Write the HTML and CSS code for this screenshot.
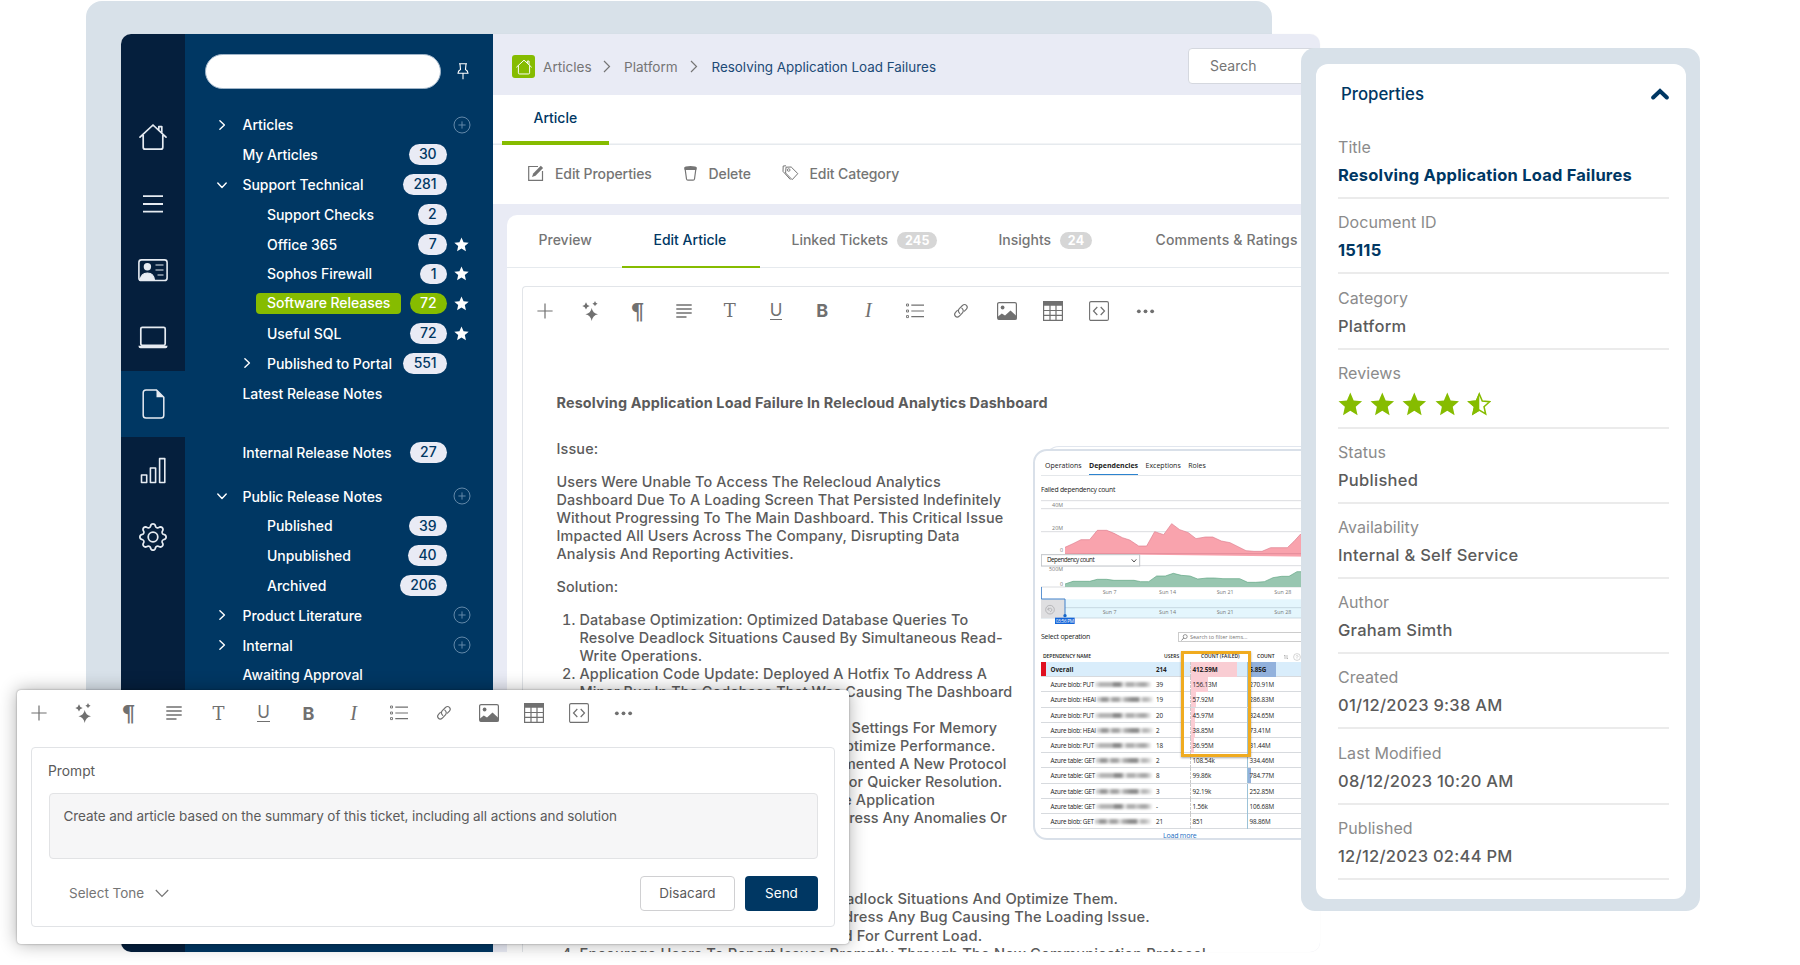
FILE: index.html
```html
<!DOCTYPE html>
<html lang="en">
  <head>
    <meta charset="UTF-8" />
    <meta name="viewport" content="width=device-width, initial-scale=1.0" />
    <title>Knowledge Base - Resolving Application Load Failures</title>
    <link rel="stylesheet" href="styles.css">
  </head>
  <body>
    <!-- Icon sprite -->
    <svg class="sprite" aria-hidden="true">
      <symbol id="i-home" viewBox="0 0 28 28">
        <path d="M1 14.2 14 2l13 12.2M4.2 12v12.2q0 2 2 2h15.6q2 0 2-2V12M19.8 6.6V3.6h3v6" fill="none" stroke="currentColor" stroke-width="1.7" stroke-linecap="round" stroke-linejoin="round" />
      </symbol>
      <symbol id="i-star" viewBox="0 0 24 24">
        <path d="M12 .6l3.3 7.6 8.2.8-6.2 5.5 1.8 8.1L12 18.4l-7.1 4.2 1.8-8.1L.5 9l8.2-.8z" fill="currentColor" />
      </symbol>
      <symbol id="i-star-half" viewBox="0 0 24 24">
        <path d="M12 2l2.9 6.8 7.2.7-5.5 4.8 1.6 7.1L12 17.7l-6.2 3.7 1.6-7.1L1.9 9.5l7.2-.7z" fill="none" stroke="currentColor" stroke-width="1.5" />
        <path d="M12 .6v17.8l-7.1 4.2 1.8-8.1L.5 9l8.2-.8z" fill="currentColor" />
      </symbol>
      <symbol id="i-chev" viewBox="0 0 10 10">
        <path d="M2.9.8 7.4 5 2.9 9.2" fill="none" stroke="currentColor" stroke-width="1.4" stroke-linecap="round" stroke-linejoin="round" />
      </symbol>
      <symbol id="i-add" viewBox="0 0 18 18">
        <path d="M9 1a8 8 0 1 0 0 16A8 8 0 0 0 9 1zM9 5.4v7.2M5.4 9h7.2" fill="none" stroke="currentColor" />
      </symbol>
      <symbol id="t-plus" viewBox="0 0 20 20">
        <path d="M10 2.4v15.2M2.4 10h15.2" stroke="currentColor" stroke-width="1.2" />
      </symbol>
      <symbol id="t-spark" viewBox="0 0 20 20">
        <path d="M10.7 7q.9 5.2 6.3 6.3-5.4 1.1-6.3 6.7Q9.8 14.4 4.4 13.3 9.8 12.2 10.7 7zM5 1.2q.6 3 3.7 3.7-3.1.7-3.7 3.7-.6-3-3.7-3.7Q4.4 4.2 5 1.2zM14 .1q.4 2.1 2.6 2.6-2.2.5-2.6 2.6-.4-2.1-2.6-2.6Q13.6 2.2 14 .1z" fill="currentColor" />
      </symbol>
      <symbol id="t-lines" viewBox="0 0 20 20">
        <path d="M2.3 4h15.4M2.3 8h15.4M2.3 12h15.4M2.3 16h10.2" stroke="currentColor" stroke-width="1.3" />
      </symbol>
      <symbol id="t-list" viewBox="0 0 20 20">
        <path d="M6.3 4.2H19M6.3 10H19M6.3 15.6H19" stroke="currentColor" stroke-width="1.2" />
        <path d="M1.5 3h2v2h-2zM1.5 9h2v2h-2zM1.5 14.6h2v2h-2z" fill="none" stroke="currentColor" stroke-width=".9" />
      </symbol>
      <symbol id="t-link" viewBox="0 0 20 20">
        <g fill="none" stroke="currentColor" stroke-width="1.25" stroke-linecap="round">
          <path d="M8.6 12.6C6.8 11 6.7 8.9 8.1 7.4l3.5-3.5c3.3-2.9 7 1 4.4 4l-2.2 2.3" />
          <path d="M10.9 6.8c1.9 1.5 2.1 3.8.7 5.3l-3.4 3.5c-3.3 2.9-7-1-4.3-4l2.1-2.2" />
        </g>
      </symbol>
      <symbol id="t-image" viewBox="0 0 20 20">
        <rect x=".6" y="1.6" width="18.8" height="16.8" rx="1.5" fill="none" stroke="currentColor" stroke-width="1.2" />
        <circle cx="5.6" cy="6.5" r="1.9" fill="currentColor" />
        <path d="M1 15.5 4.8 12.6l3.2 2 5.5-5 6 5.4v3.4H1z" fill="currentColor" />
      </symbol>
      <symbol id="t-table" viewBox="0 0 20 20">
        <path d="M.6.6h18.8v18.8H.6zM.6 9.5h18.8M.6 14.4h18.8M7 4v15.4M13 4v15.4" fill="none" stroke="currentColor" stroke-width="1.2" />
        <path d="M.3 1.5Q.3.2 1.6.2h16.8q1.3 0 1.3 1.3v3.3H.3z" fill="currentColor" />
      </symbol>
      <symbol id="t-code" viewBox="0 0 20 20">
        <rect x=".6" y=".6" width="18.8" height="18.8" rx="1.4" fill="none" stroke="currentColor" stroke-width="1.1" />
        <path d="M8.3 6 4.5 10l3.8 4M11.7 6l3.8 4-3.8 4" fill="none" stroke="currentColor" stroke-width="1.2" />
      </symbol>
      <symbol id="t-more" viewBox="0 0 20 20">
        <circle cx="3" cy="10.3" r="2" fill="currentColor" /><circle cx="10" cy="10.3" r="2" fill="currentColor" /><circle cx="17" cy="10.3" r="2" fill="currentColor" />
      </symbol>
    </svg>

    <div class="backdrop"></div>

    <div class="app-window">
      <!-- Icon rail -->
      <nav class="rail">
        <a class="rail-item"><svg width="28" height="28"><use href="#i-home" /></svg></a>
        <a class="rail-item"><svg width="20" height="18" viewBox="0 0 20 18"><path d="M0 1.2h20M0 9h20M0 16.7h20" stroke="currentColor" stroke-width="1.8" /></svg></a>
        <a class="rail-item">
          <svg width="30" height="23" viewBox="0 0 30 23">
            <rect x=".9" y=".9" width="28.2" height="20.6" rx="2.6" fill="none" stroke="currentColor" stroke-width="1.6" />
            <circle cx="9.4" cy="7.8" r="3.7" fill="currentColor" />
            <path d="M2 21.5q1-7.5 7.4-7.5t7.2 7.5zM17.5 6h8M17.5 11h8M19.5 16h6" fill="currentColor" stroke="currentColor" stroke-width="1.2" />
          </svg>
        </a>
        <a class="rail-item">
          <svg width="30" height="23" viewBox="0 0 30 23">
            <rect x="2.8" y="1.3" width="24.4" height="18" rx="1.5" fill="none" stroke="currentColor" stroke-width="1.7" />
            <path d="M.4 19.8h29.2q-.2 2.5-2 2.5H2.4q-1.8 0-2-2.5z" fill="currentColor" />
          </svg>
        </a>
        <a class="rail-item active">
          <svg width="23" height="30" viewBox="0 0 23 30">
            <path d="M14.5 1H4Q1.2 1 1.2 3.8v22.4Q1.2 29 4 29h15q2.8 0 2.8-2.8V8.3z" fill="none" stroke="currentColor" stroke-width="1.5" />
            <path d="M14.5 1v7.3h7.3z" fill="currentColor" />
          </svg>
        </a>
        <a class="rail-item">
          <svg width="27" height="27" viewBox="0 0 27 27">
            <path d="M1.5 18h5.2v7.5H1.5zM10.4 11h5.2v14.5h-5.2zM19.6 1.6h5.2v23.9h-5.2z" fill="none" stroke="currentColor" stroke-width="1.6" stroke-linejoin="round" />
          </svg>
        </a>
        <a class="rail-item">
          <svg width="28" height="28" viewBox="0 0 16 16" fill="currentColor">
            <path d="M8 4.754a3.246 3.246 0 1 0 0 6.492 3.246 3.246 0 0 0 0-6.492zM5.754 8a2.246 2.246 0 1 1 4.492 0 2.246 2.246 0 0 1-4.492 0z" />
            <path d="M9.796 1.343c-.527-1.79-3.065-1.79-3.592 0l-.094.319a.873.873 0 0 1-1.255.52l-.292-.16c-1.64-.892-3.433.902-2.54 2.541l.159.292a.873.873 0 0 1-.52 1.255l-.319.094c-1.79.527-1.79 3.065 0 3.592l.319.094a.873.873 0 0 1 .52 1.255l-.16.292c-.892 1.64.901 3.434 2.541 2.54l.292-.159a.873.873 0 0 1 1.255.52l.094.319c.527 1.79 3.065 1.79 3.592 0l.094-.319a.873.873 0 0 1 1.255-.52l.292.16c1.64.893 3.434-.902 2.54-2.541l-.159-.292a.873.873 0 0 1 .52-1.255l.319-.094c1.79-.527 1.79-3.065 0-3.592l-.319-.094a.873.873 0 0 1-.52-1.255l.16-.292c.893-1.64-.902-3.433-2.541-2.54l-.292.159a.873.873 0 0 1-1.255-.52l-.094-.319zm-2.633.283c.246-.835 1.428-.835 1.674 0l.094.319a1.873 1.873 0 0 0 2.693 1.115l.291-.16c.764-.415 1.6.42 1.184 1.185l-.159.292a1.873 1.873 0 0 0 1.116 2.692l.318.094c.835.246.835 1.428 0 1.674l-.319.094a1.873 1.873 0 0 0-1.115 2.693l.16.291c.415.764-.42 1.6-1.185 1.184l-.291-.159a1.873 1.873 0 0 0-2.693 1.116l-.094.318c-.246.835-1.428.835-1.674 0l-.094-.319a1.873 1.873 0 0 0-2.692-1.115l-.292.16c-.764.415-1.6-.42-1.184-1.185l.159-.291A1.873 1.873 0 0 0 1.945 8.93l-.319-.094c-.835-.246-.835-1.428 0-1.674l.319-.094A1.873 1.873 0 0 0 3.06 4.377l-.16-.292c-.415-.764.42-1.6 1.185-1.184l.292.159a1.873 1.873 0 0 0 2.692-1.115l.094-.319z" />
          </svg>
        </a>
      </nav>

      <!-- Category tree -->
      <aside class="tree">
        <div class="tree-search">
          <div class="search-pill"></div>
          <svg width="12" height="17" viewBox="0 0 12 17"><path d="M2 .8h8M3 1l.5 5.5Q1 7.8 1 10.2h10Q11 7.8 8.5 6.5L9 1M6 10.2v6" fill="none" stroke="currentColor" stroke-width="1.1" /></svg>
        </div>

        <div class="row"><svg class="chev"><use href="#i-chev" /></svg><span class="label">Articles</span><svg class="add"><use href="#i-add" /></svg></div>
        <div class="row"><span class="chev"></span><span class="label">My Articles</span><span class="count">30</span></div>
        <div class="row"><svg class="chev open"><use href="#i-chev" /></svg><span class="label">Support Technical</span><span class="count">281</span></div>
        <div class="row sub"><span class="chev"></span><span class="label">Support Checks</span><span class="count">2</span></div>
        <div class="row sub"><span class="chev"></span><span class="label">Office 365</span><span class="count">7</span><svg class="fav"><use href="#i-star" /></svg></div>
        <div class="row sub"><span class="chev"></span><span class="label">Sophos Firewall</span><span class="count">1</span><svg class="fav"><use href="#i-star" /></svg></div>
        <div class="row sub selected"><span class="chev"></span><span class="label">Software Releases</span><span class="count">72</span><svg class="fav"><use href="#i-star" /></svg></div>
        <div class="row sub"><span class="chev"></span><span class="label">Useful SQL</span><span class="count">72</span><svg class="fav"><use href="#i-star" /></svg></div>
        <div class="row sub"><svg class="chev"><use href="#i-chev" /></svg><span class="label">Published to Portal</span><span class="count">551</span></div>
        <div class="row"><span class="chev"></span><span class="label">Latest Release Notes</span></div>
        <div class="row gap-before"><span class="chev"></span><span class="label">Internal Release Notes</span><span class="count">27</span></div>
        <div class="row half-before"><svg class="chev open"><use href="#i-chev" /></svg><span class="label">Public Release Notes</span><svg class="add"><use href="#i-add" /></svg></div>
        <div class="row sub"><span class="chev"></span><span class="label">Published</span><span class="count">39</span></div>
        <div class="row sub"><span class="chev"></span><span class="label">Unpublished</span><span class="count">40</span></div>
        <div class="row sub"><span class="chev"></span><span class="label">Archived</span><span class="count">206</span></div>
        <div class="row"><svg class="chev"><use href="#i-chev" /></svg><span class="label">Product Literature</span><svg class="add"><use href="#i-add" /></svg></div>
        <div class="row"><svg class="chev"><use href="#i-chev" /></svg><span class="label">Internal</span><svg class="add"><use href="#i-add" /></svg></div>
        <div class="row"><span class="chev"></span><span class="label">Awaiting Approval</span></div>
      </aside>

      <!-- Main area -->
      <main class="main">
        <header class="crumbs">
          <span class="crumb-home"><svg width="16" height="16"><use href="#i-home" /></svg></span>
          <span class="crumb c1">Articles</span>
          <svg class="sep" viewBox="0 0 8 13"><path d="M1 1l5.5 5.5L1 12" fill="none" stroke="currentColor" stroke-width="1.2" /></svg>
          <span class="crumb c2">Platform</span>
          <svg class="sep" viewBox="0 0 8 13"><path d="M1 1l5.5 5.5L1 12" fill="none" stroke="currentColor" stroke-width="1.2" /></svg>
          <span class="crumb current">Resolving Application Load Failures</span>
          <div class="search-box">Search</div>
        </header>

        <div class="page-tabs"><span class="page-tab">Article</span></div>

        <div class="actions">
          <span class="action edit">
            <svg width="16" height="16" viewBox="0 0 16 16"><path d="M10 1.5H.7v13.8h13.8V6" fill="none" stroke="currentColor" stroke-width="1.2" /><path d="M4 12l1.2-3.5L12.8.8l2.3 2.2-7.6 7.7z" fill="currentColor" /></svg>
            Edit Properties
          </span>
          <span class="action delete">
            <svg width="13" height="16" viewBox="0 0 13 16"><path d="M1 3l1.5 11q.2 1.2 1.4 1.2h5.2q1.2 0 1.4-1.2L12 3" fill="none" stroke="currentColor" stroke-width="1.2" /><path d="M.3 2.6Q.3 1 6.5 1t6.2 1.6L12.3 5H.7z" fill="currentColor" /></svg>
            Delete
          </span>
          <span class="action category">
            <svg width="17" height="16" viewBox="0 0 17 16"><path d="M4 2.2 9.2 2l6.6 6.6-5.6 6.1L3.6 8z" fill="none" stroke="currentColor" /><path d="M4 .8 1.2 1 1 6.4l7.4 8.2" fill="none" stroke="currentColor" /><circle cx="6.7" cy="5" r="1.3" fill="none" stroke="currentColor" stroke-width=".9" /></svg>
            Edit Category
          </span>
        </div>

        <section class="card">
          <div class="card-tabs">
            <span class="card-tab preview">Preview</span>
            <span class="card-tab active">Edit Article</span>
            <span class="card-tab linked">Linked Tickets <b>245</b></span>
            <span class="card-tab insights">Insights <b>24</b></span>
            <span class="card-tab comments">Comments &amp; Ratings</span>
          </div>

          <div class="editor">
            <div class="toolbar">
              <span><svg><use href="#t-plus" /></svg></span>
              <span><svg><use href="#t-spark" /></svg></span>
              <span class="g-para">¶</span>
              <span><svg><use href="#t-lines" /></svg></span>
              <span class="g-text">T</span>
              <span class="g-under"><i>U</i></span>
              <span class="g-bold">B</span>
              <span class="g-italic">I</span>
              <span><svg><use href="#t-list" /></svg></span>
              <span><svg class="small"><use href="#t-link" /></svg></span>
              <span><svg><use href="#t-image" /></svg></span>
              <span><svg><use href="#t-table" /></svg></span>
              <span><svg><use href="#t-code" /></svg></span>
              <span><svg class="more"><use href="#t-more" /></svg></span>
            </div>

            <article class="doc">
              <h1>Resolving Application Load Failure In Relecloud Analytics Dashboard</h1>
              <div class="doc-cols">
                <div class="doc-text">
                  <p>Issue:</p>
                  <p>Users Were Unable To Access The Relecloud Analytics<br />
                    Dashboard Due To A Loading Screen That Persisted Indefinitely<br />
                    Without Progressing To The Main Dashboard. This Critical Issue<br />
                    Impacted All Users Across The Company, Disrupting Data<br />
                    Analysis And Reporting Activities.</p>
                  <p>Solution:</p>
                  <ol>
                    <li>Database Optimization: Optimized Database Queries To<br />
                      Resolve Deadlock Situations Caused By Simultaneous Read-<br />
                      Write Operations.</li>
                    <li>Application Code Update: Deployed A Hotfix To Address A<br />
                      <span class="snug">Minor Bug In The Codebase That Was Causing The Dashboard</span><br />
                      To Hang.</li>
                    <li>Resource Allocation: Increased Server Settings For Memory<br />
                      And Processing Capacities, Helping Optimize Performance.</li>
                    <li><span class="snug">User Communication: Our Team Implemented A New Protocol</span><br />
                      <span class="snug">To Report Any Load Failures Early On For Quicker Resolution.</span></li>
                    <li>Monitoring: Now Actively Tracking The Application<br />
                      <span class="snug">To Detect Any Problems Early And Address Any Anomalies Or</span></li>
                  </ol>
                </div>

                <!-- Dependency report -->
                <figure class="report">
                  <div class="report-tabs">
                    <span>Operations</span><span class="on">Dependencies</span><span>Exceptions</span><span>Roles</span>
                  </div>
                  <div class="report-title">Failed dependency count</div>
                  <svg class="chart" viewBox="66 200 810 384">
                    <g stroke="#c9ccd0" stroke-width="2">
                      <path d="M66 211h810M66 235h810M66 304h810" />
                      <path d="M66 406h810M66 470h810" />
                    </g>
                    <path d="M138 370v-19l24-11 24-12h26l23-28h28l22 9 25 13 22 7 27 18h24l24-43 27 9 24-33 24 18 26 9 23 18 28-5h22l26 12 26 5 24 12 24 12 24 2h24l26-11h50l20-19 20-22 40-42v110z" fill="#f9a3ad" />
                    <path d="M138 351l24-11 24-12h26l23-28h28l22 9 25 13 22 7 27 18h24l24-43 27 9 24-33 24 18 26 9 23 18 28-5h22l26 12 26 5 24 12 24 12 24 2h24l26-11h50l20-19 20-22" fill="none" stroke="#dc7c8c" stroke-width="2" />
                    <path d="M138 370h738" stroke="#d9828f" stroke-width="2" />
                    <path d="M138 470v-9l24-8h50l23-6h28l22 3h60l20 4h24l24-17h26l24-8 24 6 26 2 23 9 28-3h22l26 2h50l24 11h24l26-2 26-12 26-4h22l24-14h60v46z" fill="#98c6b0" />
                    <path d="M138 461l24-8h50l23-6h28l22 3h60l20 4h24l24-17h26l24-8 24 6 26 2 23 9 28-3h22l26 2h50l24 11h24l26-2 26-12 26-4h22l24-14h50" fill="none" stroke="#5fa482" stroke-width="2" />
                    <path d="M66 507h810v56H66z" fill="#e4f6fd" />
                    <path d="M138 532h738M66 563h810" stroke="#b8c9d4" stroke-width="2" />
                    <path d="M66 507h72v56H66z" fill="#dfdfe1" />
                    <path d="M67 470v36h71v52" fill="none" stroke="#3e7fc9" stroke-width="3" />
                    <circle cx="93" cy="538" r="13" fill="none" stroke="#a5a5a8" stroke-width="2" />
                    <path d="M89 532l-3 6 6 2M87 537q11-8 12 3l-6 5" fill="none" stroke="#a5a5a8" stroke-width="2" />
                    <circle cx="138" cy="556" r="5" fill="#1767c9" />
                    <path d="M108 562h59v19h-59z" fill="#1565d8" />
                    <rect x="67" y="373" width="295" height="34" fill="#fff" stroke="#c0c4c8" stroke-width="3" />
                    <path d="M338 387l7 8 7-8" fill="none" stroke="#333" stroke-width="2.5" />
                    <g class="axis">
                      <text x="132" y="231" text-anchor="end">40M</text>
                      <text x="132" y="299" text-anchor="end">20M</text>
                      <text x="132" y="366" text-anchor="end">0</text>
                      <text x="132" y="422" text-anchor="end">500M</text>
                      <text x="132" y="466" text-anchor="end">0</text>
                      <text x="251" y="491">Sun 7</text><text x="420" y="491">Sun 14</text><text x="593" y="491">Sun 21</text><text x="766" y="491">Sun 28</text>
                      <text x="251" y="552">Sun 7</text><text x="420" y="552">Sun 14</text><text x="593" y="552">Sun 21</text><text x="766" y="552">Sun 28</text>
                    </g>
                    <text x="84" y="396" class="pick" textLength="143">Dependency count</text>
                    <text x="110" y="577" class="stamp" textLength="55">03:56 PM</text>
                  </svg>
                  <div class="op-row">
                    <span>Select operation</span>
                    <div class="op-filter"><svg width="7" height="7" viewBox="0 0 7 7"><circle cx="4.2" cy="2.6" r="2" fill="none" stroke="#555" stroke-width=".6" /><path d="M2.7 4 .5 6.5" stroke="#555" stroke-width=".7" /></svg>Search to filter items...</div>
                  </div>
                  <div class="deps">
                    <div class="dep head"><span>DEPENDENCY NAME</span><span>USERS</span><span>COUNT (FAILED)</span><span>COUNT <svg width="20" height="8" viewBox="0 0 20 8"><path d="M2 3l1-1v4M5 2v4l1-1" fill="none" stroke="#999" stroke-width=".6" /><circle cx="15" cy="4" r="3.4" fill="none" stroke="#bbb" stroke-width=".6" /><path d="M13.8 3.2q1.2-1.6 2.4 0l-1.2 1.3v1" fill="none" stroke="#bbb" stroke-width=".6" /></svg></span></div>
                    <div class="dep overall"><span>Overall</span><span>214</span><span>412.59M</span><span>5.85G</span></div>
                    <div class="dep f1"><span>Azure blob: PUT<em></em></span><span>39</span><span>156.13M</span><span>270.91M</span></div>
                    <div class="dep f2"><span>Azure blob: HEAI<em></em></span><span>19</span><span>57.92M</span><span>286.83M</span></div>
                    <div class="dep f3"><span>Azure blob: PUT<em></em></span><span>20</span><span>45.97M</span><span>324.65M</span></div>
                    <div class="dep f3"><span>Azure blob: HEAI<em></em></span><span>2</span><span>38.85M</span><span>73.41M</span></div>
                    <div class="dep f4"><span>Azure blob: PUT<em></em></span><span>18</span><span>36.95M</span><span>31.44M</span></div>
                    <div class="dep"><span>Azure table: GET<em></em></span><span>2</span><span>108.54k</span><span>334.46M</span></div>
                    <div class="dep c1"><span>Azure table: GET<em></em></span><span>8</span><span>99.86k</span><span>784.77M</span></div>
                    <div class="dep"><span>Azure table: GET<em></em></span><span>3</span><span>92.19k</span><span>252.85M</span></div>
                    <div class="dep"><span>Azure table: GET<em></em></span><span>-</span><span>1.56k</span><span>106.68M</span></div>
                    <div class="dep"><span>Azure blob: GET<em></em></span><span>21</span><span>851</span><span>98.86M</span></div>
                    <div class="highlight"></div>
                  </div>
                  <div class="load-more">Load more</div>
                </figure>
              </div>

              <p class="prevent">Prevention:</p>
              <ol class="wide">
                <li>Monitor The Database Closely For Deadlock Situations And Optimize Them.</li>
                <li>Review Source Code Regularly To Address Any Bug Causing The Loading Issue.</li>
                <li>Keep Server Resources Well Allocated For Current Load.</li>
                <li>Encourage Users To Report Issues Promptly Through The New Communication Protocol</li>
              </ol>
            </article>
          </div>
        </section>
      </main>
    </div>

    <!-- Properties panel -->
    <aside class="props">
      <div class="props-inner">
        <div class="props-head">
          Properties
          <svg width="18" height="12" viewBox="0 0 18 12"><path d="M2.2 9.5 9 3l6.8 6.5" fill="none" stroke="currentColor" stroke-width="4" stroke-linecap="round" /></svg>
        </div>
        <div class="field"><label>Title</label><strong>Resolving Application Load Failures</strong></div>
        <div class="field"><label>Document ID</label><strong>15115</strong></div>
        <div class="field"><label>Category</label><span>Platform</span></div>
        <div class="field reviews">
          <label>Reviews</label>
          <div class="stars">
            <svg><use href="#i-star" /></svg><svg><use href="#i-star" /></svg><svg><use href="#i-star" /></svg><svg><use href="#i-star" /></svg><svg><use href="#i-star-half" /></svg>
          </div>
        </div>
        <div class="field"><label>Status</label><span>Published</span></div>
        <div class="field"><label>Availability</label><span>Internal &amp; Self Service</span></div>
        <div class="field"><label>Author</label><span>Graham Simth</span></div>
        <div class="field"><label>Created</label><span>01/12/2023 9:38 AM</span></div>
        <div class="field"><label>Last Modified</label><span>08/12/2023 10:20 AM</span></div>
        <div class="field"><label>Published</label><span>12/12/2023 02:44 PM</span></div>
      </div>
    </aside>

    <!-- AI prompt dialog -->
    <div class="prompt-dialog">
      <div class="toolbar">
        <span><svg><use href="#t-plus" /></svg></span>
        <span><svg><use href="#t-spark" /></svg></span>
        <span class="g-para">¶</span>
        <span><svg><use href="#t-lines" /></svg></span>
        <span class="g-text">T</span>
        <span class="g-under"><i>U</i></span>
        <span class="g-bold">B</span>
        <span class="g-italic">I</span>
        <span><svg><use href="#t-list" /></svg></span>
        <span><svg class="small"><use href="#t-link" /></svg></span>
        <span><svg><use href="#t-image" /></svg></span>
        <span><svg><use href="#t-table" /></svg></span>
        <span><svg><use href="#t-code" /></svg></span>
        <span><svg class="more"><use href="#t-more" /></svg></span>
      </div>
      <div class="prompt-box">
        <div class="prompt-label">Prompt</div>
        <div class="prompt-input">Create and article based on the summary of this ticket, including all actions and solution</div>
        <div class="prompt-foot">
          <span class="tone">Select Tone</span>
          <svg width="14" height="9" viewBox="0 0 14 9"><path d="M.8 1 7 7.5 13.2 1" fill="none" stroke="currentColor" stroke-width="1.2" /></svg>
          <button class="btn discard">Disacard</button>
          <button class="btn send">Send</button>
        </div>
      </div>
    </div>
  </body>
</html>
```

FILE: styles.css
```css
:root {
  --navy: #003763;
  --navy-dark: #051f3d;
  --green: #86bc00;
  --frame: #d8e1e9;
  --lilac: #e9ebf5;
  --grey: #757575;
  --text: #5b5b5b;
}

* {
  box-sizing: border-box;
}

body {
  margin: 0;
  width: 1800px;
  height: 965px;
  position: relative;
  overflow: hidden;
  background: #fff;
  font-family: Inter, 'Open Sans', sans-serif;
  font-size: 14px;
  color: var(--text);
}

.sprite {
  position: absolute;
  width: 0;
  height: 0;
}

.backdrop {
  position: absolute;
  left: 86px;
  top: 1px;
  width: 1186px;
  height: 920px;
  border-radius: 16px;
  background: var(--frame);
}

.app-window {
  position: absolute;
  left: 121px;
  top: 34px;
  width: 1199px;
  height: 918px;
  border-radius: 10px;
  overflow: hidden;
  display: flex;
  background: #fff;
  box-shadow: 0 0 1px rgba(0, 0, 0, 0.08);
}

/* Icon rail */
.rail {
  width: 64px;
  flex: none;
  padding-top: 70px;
  background: var(--navy-dark);
  color: #e6ebf2;
}

.rail-item {
  height: 66.7px;
  display: flex;
  align-items: center;
  justify-content: center;
}

.rail-item.active {
  background: var(--navy);
}

/* Category tree */
.tree {
  width: 308px;
  flex: none;
  padding: 20px 14px 0 20px;
  background: var(--navy);
  color: #fff;
  font-weight: 500;
  letter-spacing: -0.05px;
}

.tree-search {
  display: flex;
  align-items: center;
  gap: 16px;
  margin-bottom: 21.1px;
}

.search-pill {
  width: 236px;
  height: 35px;
  border-radius: 18px;
  background: #fff;
  border: 1px solid #9fb4c8;
}

.row {
  height: 29.8px;
  display: flex;
  align-items: center;
  padding-left: 12px;
  white-space: nowrap;
}

.row.sub {
  padding-left: 36.5px;
}

.gap-before {
  margin-top: 29.8px;
}

.half-before {
  margin-top: 13.5px;
}

.chev {
  width: 10px;
  height: 10px;
  margin-right: 15.5px;
  flex: none;
}

.chev.open {
  transform: rotate(90deg);
}

.count {
  margin-left: auto;
  margin-right: 32px;
  height: 20.7px;
  line-height: 20.7px;
  padding: 0 10.4px;
  border-radius: 11px;
  background: var(--lilac);
  color: var(--navy);
}

.row .fav {
  width: 15px;
  height: 15px;
  margin: 0 10px 0 -25px;
}

.row .add {
  width: 18px;
  height: 18px;
  margin: 0 8px 0 auto;
  color: #6388a8;
}

.selected .label {
  background: var(--green);
  border-radius: 4px;
  line-height: 20.7px;
  padding: 0 11px;
  margin-left: -11px;
}

.selected .count {
  background: var(--green);
  color: #fff;
}

/* Main area */
.main {
  flex: 1;
  min-width: 0;
  background: var(--lilac);
  display: flex;
  flex-direction: column;
}

.crumbs {
  height: 60.5px;
  flex: none;
  padding: 5px 0 0 19px;
  display: flex;
  align-items: center;
  color: var(--grey);
  white-space: nowrap;
}

.crumb-home {
  width: 23px;
  height: 23px;
  border-radius: 3px;
  background: var(--green);
  color: #fff;
  display: flex;
  align-items: center;
  justify-content: center;
  margin-right: 8px;
}

.sep {
  width: 8px;
  height: 13px;
  margin: 0 13px 0 12px;
}

.crumb {
  font-size: 13.6px;
}

.crumb.c1 {
  width: 48px;
}

.crumb.c2 {
  width: 54px;
}

.crumb.current {
  font-size: 13.4px;
  margin-left: 0.5px;
  color: #1c4a76;
}

.search-box {
  margin: -2px -20px 0 auto;
  width: 152px;
  height: 36px;
  line-height: 34px;
  flex: none;
  padding-left: 21px;
  background: #fff;
  border: 1px solid #d5d8df;
  border-radius: 4px;
}

.page-tabs {
  background: #fff;
  height: 50.5px;
  flex: none;
  padding-left: 9px;
  box-shadow: inset 0 -1.5px #e6eaee;
}

.page-tab {
  display: block;
  width: 107px;
  height: 50.5px;
  line-height: 46px;
  padding-left: 31.5px;
  border-bottom: 4px solid var(--green);
  color: var(--navy);
  font-weight: 500;
}

.actions {
  height: 58.5px;
  flex: none;
  background: #fff;
  display: flex;
  align-items: center;
  padding: 0 0 2px 35px;
  color: var(--grey);
  font-weight: 500;
  letter-spacing: -0.1px;
}

.action {
  display: flex;
  align-items: center;
  gap: 11px;
}

.edit {
  width: 155.5px;
}

.delete {
  width: 98px;
  gap: 12px;
}

.card {
  margin: 11px 0 0 14px;
  flex: 1;
  min-height: 0;
  background: #fff;
  border-radius: 10px 0 0 0;
}

.card-tabs {
  height: 53px;
  display: flex;
  line-height: 50px;
  color: var(--grey);
  font-weight: 500;
  white-space: nowrap;
  border-bottom: 1.5px solid #e6eaee;
}

.card-tab b {
  background: #d6d6d6;
  color: #fff;
  font-size: 12.5px;
  line-height: 17px;
  border-radius: 9px;
  display: inline-block;
  padding: 0 7.5px;
  margin-left: 5.5px;
  letter-spacing: 0.3px;
}

.preview {
  width: 115px;
  padding-left: 31.5px;
}

.card-tab.active {
  width: 138px;
  height: 53px;
  padding-left: 31.5px;
  color: var(--navy);
  border-bottom: 2.5px solid var(--green);
}

.linked {
  width: 238.5px;
  padding-left: 31.5px;
}

.insights {
  width: 157px;
}

.comments {
  letter-spacing: 0.18px;
}

.editor {
  margin: 18.5px 0 0 15px;
  border: 1px solid #e2e5e9;
  border-right: 0;
  border-radius: 4px 0 0 0;
  height: 700px;
}

/* Shared formatting toolbar */
.toolbar {
  display: flex;
  height: 47px;
  color: #707070;
}

.toolbar > span {
  width: 46.2px;
  flex: none;
  display: flex;
  align-items: center;
  justify-content: center;
}

.editor .toolbar {
  margin-left: -1px;
}

.toolbar svg {
  width: 20px;
  height: 20px;
}

.toolbar svg.small {
  width: 18px;
  height: 18px;
}

.toolbar svg.more {
  width: 19px;
}

.toolbar .g-para {
  font: bold 22px 'DejaVu Serif', serif;
}

.toolbar .g-text {
  font: 18px 'DejaVu Serif', serif;
}

.toolbar .g-under i {
  font: 17px/17px Inter, sans-serif;
  border-bottom: 1.5px solid;
}

.toolbar .g-bold {
  font-size: 18px;
  font-weight: 700;
}

.toolbar .g-italic {
  font: italic 20px 'Liberation Serif', serif;
}

/* Document body */
.doc {
  padding: 60px 0 0 33.5px;
  font-size: 14.4px;
  line-height: 18px;
  font-weight: 500;
  letter-spacing: 0.14px;
  white-space: nowrap;
}

.doc h1 {
  margin: 0;
  font-size: 14.4px;
  line-height: 18px;
  font-weight: 700;
}

.doc-cols {
  margin-top: 28px;
  height: 400px;
  display: grid;
  grid-template-columns: 476.5px 1fr;
}

.doc-text p {
  margin: 0 0 15px;
}

.doc ol {
  margin: 0;
  padding-left: 23px;
}

.doc .snug {
  letter-spacing: 0.07px;
}

.doc .prevent {
  margin: 18px 0 14px;
}

.doc .wide {
  font-size: 14.7px;
  line-height: 18.3px;
  letter-spacing: 0.14px;
}

/* Dependency report */
.report {
  margin: 9px 0 0;
  width: 310px;
  height: 391px;
  border: 2px solid #d9e0e9;
  border-radius: 14px;
  box-shadow: 12px -3px 0 -1px #fff, 12px -3px 0 0 #e1e6ee;
  overflow: hidden;
  background: #fff;
  padding-left: 6px;
  font-family: 'Open Sans', 'Noto Sans', sans-serif;
  font-size: 7px;
  font-weight: 400;
  letter-spacing: 0;
  color: #222;
}

.report-tabs {
  height: 25px;
  padding: 6px 0 0 4px;
  display: flex;
  gap: 7.5px;
  border-bottom: 1px solid #e4e7ea;
  line-height: 18px;
}

.report-tabs .on {
  font-weight: 700;
  border-bottom: 1.5px solid #2b83cf;
}

.report-title {
  height: 21px;
  line-height: 27px;
  font-size: 6.8px;
  letter-spacing: -0.22px;
}

.chart {
  display: block;
  width: 270px;
  height: 128px;
}

.axis {
  font-size: 16px;
  fill: #777;
}

.pick {
  font-size: 19px;
  fill: #222;
}

.stamp {
  font-size: 14px;
  fill: #fff;
}

.op-row {
  display: flex;
  align-items: center;
  height: 24px;
}

.op-row > span {
  width: 137px;
  letter-spacing: -0.25px;
}

.op-filter {
  display: flex;
  align-items: center;
  gap: 2px;
  flex: 1;
  height: 10px;
  padding-left: 2px;
  border: 1px solid #ccc;
  font-size: 5.5px;
  color: #777;
}

.deps {
  position: relative;
}

.dep {
  display: grid;
  grid-template-columns: 115px 34px 57px 1fr;
  height: 15.2px;
  line-height: 15px;
  border-bottom: 1px solid #d7dade;
  font-size: 6.3px;
  letter-spacing: -0.1px;
}

.dep span:first-child {
  padding-left: 9.5px;
  display: flex;
  align-items: center;
  letter-spacing: -0.22px;
}

.dep span:nth-child(3) {
  padding-left: 1.5px;
  border-left: 1px dashed #c9c9c9;
}

.dep span:nth-child(4) {
  padding-left: 1.5px;
  border-left: 1px solid #9cc3d8;
}

/* redacted account names */
.dep em {
  width: 56px;
  height: 5px;
  margin-left: 1px;
  background: linear-gradient(90deg, #ccc 0 3px, #999 5px 10px, #ddd 13px, #a4a4a4 16px 21px, #e4e4e4 25px, #b4b4b4 28px, #8f8f8f 35px 41px, #eee 44px, #bbb 46px 50px, #f2f2f2 56px);
  filter: blur(0.9px);
}

.dep:nth-child(odd) em {
  background: linear-gradient(90deg, #ddd 0 2px, #b5b5b5 5px 17px, #8c8c8c 19px 25px, #eee 29px, #b0b0b0 32px 38px, #ccc 40px, #aaa 46px 50px, #f2f2f2 56px);
}

.dep.head {
  height: 13px;
  border: 0;
  font-size: 5px;
  font-weight: 600;
  letter-spacing: 0;
}

.dep.head span {
  border: 0;
}

.dep.head span:first-child {
  padding-left: 2px;
  letter-spacing: -0.05px;
}

.dep.head span:nth-child(2) {
  padding-left: 8px;
}

.dep.head span:nth-child(3) {
  padding-left: 11px;
}

.dep.head span:nth-child(4) {
  padding-left: 10px;
  display: flex;
  align-items: center;
  gap: 7px;
}

.dep.overall {
  background: #d9edfb;
  font-weight: 700;
  box-shadow: inset 5px 0 #e01020;
}

.dep.overall span:first-child {
  letter-spacing: 0;
}

.overall span:nth-child(3) {
  background: linear-gradient(90deg, #f9cdd3 46px, transparent 46px);
}

.overall span:nth-child(4) {
  background: linear-gradient(90deg, #92b1dc 28px, transparent 28px);
}

.f1 span:nth-child(3) {
  background: linear-gradient(90deg, #fbcdd4 17px, transparent 17px);
}

.f2 span:nth-child(3) {
  background: linear-gradient(90deg, #fbcdd4 5px, transparent 5px);
}

.f3 span:nth-child(3) {
  background: linear-gradient(90deg, #fbcdd4 4px, transparent 4px);
}

.f4 span:nth-child(3) {
  background: linear-gradient(90deg, #fbcdd4 3px, transparent 3px);
}

.c1 span:nth-child(4) {
  background: linear-gradient(90deg, #92b1dc 3px, transparent 3px);
}

.highlight {
  position: absolute;
  left: 140px;
  top: 2px;
  width: 70px;
  height: 106px;
  border: 3px solid #f0ab1f;
  box-shadow: 0 1px 2px rgba(0, 0, 0, 0.35);
}

.load-more {
  margin-left: 122px;
  color: #1b6ec2;
  line-height: 14px;
  letter-spacing: -0.2px;
}

/* Properties panel */
.props {
  position: absolute;
  left: 1301px;
  top: 48px;
  width: 399px;
  height: 863px;
  padding: 16px 14px 12px 15px;
  border-radius: 14px;
  background: var(--frame);
}

.props-inner {
  height: 835px;
  padding: 0 17px 0 22px;
  border-radius: 12px;
  background: #fff;
}

.props-head {
  height: 60px;
  display: flex;
  align-items: center;
  justify-content: space-between;
  padding-left: 3px;
  font-size: 16.8px;
  font-weight: 500;
  color: var(--navy);
}

.field {
  height: 75.2px;
  padding-top: 9.2px;
  border-bottom: 2px solid #ebebeb;
  font-size: 16.5px;
  font-weight: 500;
  letter-spacing: 0.27px;
  line-height: 28px;
}

.field label {
  display: block;
  color: #8b8b8b;
  font-size: 16px;
  font-weight: 400;
  letter-spacing: 0.05px;
}

.field strong {
  font-weight: 700;
  letter-spacing: 0.2px;
  color: var(--navy);
}

.reviews {
  height: 79px;
}

.stars {
  display: flex;
  gap: 7.6px;
  margin-top: 5px;
}

.stars svg {
  width: 24.6px;
  height: 24.6px;
  color: var(--green);
}

/* Prompt dialog */
.prompt-dialog {
  position: absolute;
  left: 16.5px;
  top: 689.5px;
  width: 832.5px;
  height: 254px;
  padding: 0 14px;
  background: #fff;
  border-radius: 4px;
  box-shadow: 0 0 2px rgba(0, 0, 0, 0.4), 0 0 18px rgba(0, 0, 0, 0.32);
  font-size: 13.5px;
}

.prompt-dialog .toolbar {
  margin: 0 -14px 0 -14.5px;
}

.prompt-dialog .toolbar > span {
  width: 45px;
}

.prompt-box {
  height: 180px;
  margin-top: 10.5px;
  padding: 0 15px 0 16px;
  border: 1px solid #e1e3e6;
  border-radius: 4px;
}

.prompt-label {
  line-height: 47px;
  height: 45px;
  padding-left: 0.5px;
  font-size: 13.8px;
}

.prompt-input {
  height: 66px;
  padding: 0 14px;
  line-height: 45px;
  letter-spacing: -0.08px;
  border: 1px solid #e2e3e5;
  border-radius: 4px;
  background: #f6f6f7;
  white-space: nowrap;
  margin: 0 1px;
}

.prompt-foot {
  display: flex;
  align-items: center;
  height: 68px;
  padding: 0 1px 0 21.5px;
  color: var(--grey);
}

.prompt-foot .tone {
  width: 86px;
}

.btn {
  height: 35px;
  font: 13.5px Inter, sans-serif;
  border-radius: 4px;
}

.discard {
  width: 95px;
  margin-left: auto;
  background: #fff;
  border: 1px solid #d0d0d2;
  color: var(--text);
}

.send {
  width: 73px;
  margin-left: 10px;
  background: var(--navy);
  border: 0;
  color: #fff;
}
```
